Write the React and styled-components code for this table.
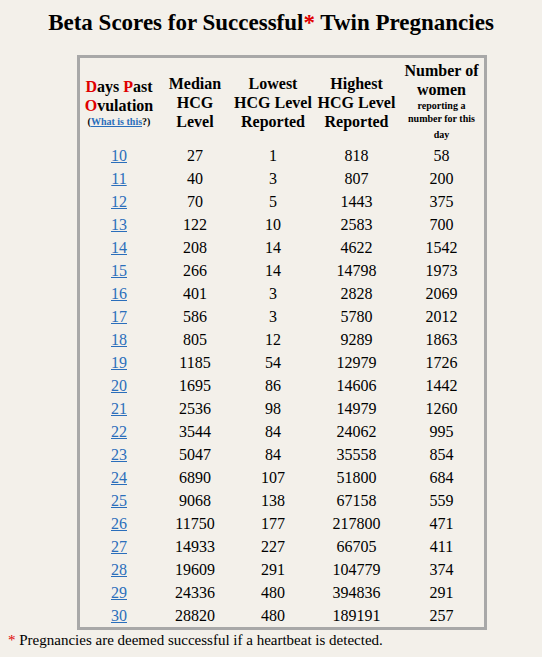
import React from 'react';
import styled, { createGlobalStyle } from 'styled-components';

const rows = [
  [10, 27, 1, 818, 58],
  [11, 40, 3, 807, 200],
  [12, 70, 5, 1443, 375],
  [13, 122, 10, 2583, 700],
  [14, 208, 14, 4622, 1542],
  [15, 266, 14, 14798, 1973],
  [16, 401, 3, 2828, 2069],
  [17, 586, 3, 5780, 2012],
  [18, 805, 12, 9289, 1863],
  [19, 1185, 54, 12979, 1726],
  [20, 1695, 86, 14606, 1442],
  [21, 2536, 98, 14979, 1260],
  [22, 3544, 84, 24062, 995],
  [23, 5047, 84, 35558, 854],
  [24, 6890, 107, 51800, 684],
  [25, 9068, 138, 67158, 559],
  [26, 11750, 177, 217800, 471],
  [27, 14933, 227, 66705, 411],
  [28, 19609, 291, 104779, 374],
  [29, 24336, 480, 394836, 291],
  [30, 28820, 480, 189191, 257],
];

const GlobalStyle = createGlobalStyle`
  html, body {
    margin: 0;
    background: #f3f0ea;
  }
  body {
    padding: 8px;
    font-family: "Liberation Serif", "Times New Roman", serif;
    color: #000;
  }
`;

const Page = styled.div`
  display: flex;
  flex-direction: column;
`;

const Title = styled.h1`
  margin: 2px 0 19px;
  text-align: center;
  font-size: 23px;
  font-weight: bold;
  line-height: 26px;
`;

const Red = styled.span`
  color: #e00000;
`;

const Box = styled.div`
  margin-left: 69px;
  width: 404px;
  border: 3px solid #a8a8a8;
  padding: 3px 0 0;
`;

const Table = styled.table`
  border-collapse: collapse;
  margin: 0 auto;
`;

const Th = styled.th`
  width: ${p => p.$w}px;
  padding: 0;
  font-size: 16px;
  line-height: 19px;
  font-weight: bold;
  text-align: center;
  vertical-align: middle;
`;

const Small = styled.div`
  font-size: 10px;
  line-height: ${p => p.$lh || 13}px;
`;

const Td = styled.td`
  height: 23px;
  padding: 0;
  font-size: 16px;
  text-align: center;
  vertical-align: middle;
`;

const Link = styled.a`
  color: #2a6ebb;
  text-decoration: underline;
`;

const Note = styled.p`
  margin: 2px 0 0;
  font-size: 15px;
`;

export default function App() {
  return (
    <Page>
      <GlobalStyle />
      <Title>
        Beta Scores for Successful<Red>*</Red> Twin Pregnancies
      </Title>
      <Box>
        <Table>
          <thead>
            <tr>
              <Th $w={78}>
                <Red>D</Red>ays <Red>P</Red>ast<br />
                <Red>O</Red>vulation
                <Small>(<Link href="#">What is this</Link>?)</Small>
              </Th>
              <Th $w={74}>Median<br />HCG<br />Level</Th>
              <Th $w={82}>Lowest<br />HCG Level<br />Reported</Th>
              <Th $w={85}>Highest<br />HCG Level<br />Reported</Th>
              <Th $w={85}>
                Number of<br />women
                <Small>reporting a<br />number for this</Small>
                <Small $lh={19}>day</Small>
              </Th>
            </tr>
          </thead>
          <tbody>
            {rows.map(r => (
              <tr key={r[0]}>
                <Td><Link href="#">{r[0]}</Link></Td>
                <Td>{r[1]}</Td>
                <Td>{r[2]}</Td>
                <Td>{r[3]}</Td>
                <Td>{r[4]}</Td>
              </tr>
            ))}
          </tbody>
        </Table>
      </Box>
      <Note>
        <Red>*</Red> Pregnancies are deemed successful if a heartbeat is detected.
      </Note>
    </Page>
  );
}
